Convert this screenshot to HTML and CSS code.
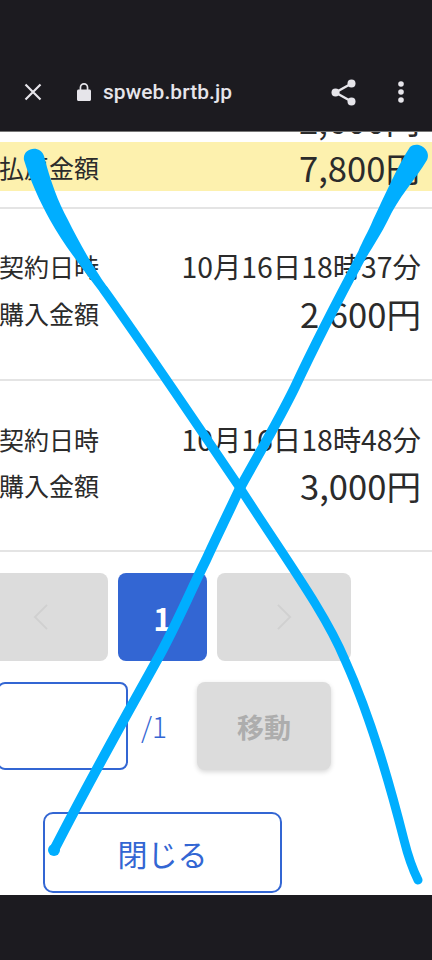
FILE: index.html
```html
<!DOCTYPE html>
<html lang="ja">
<head>
<meta charset="utf-8">
<title>spweb.brtb.jp</title>
<link rel="stylesheet" href="styles.css">
</head>
<body>
<div class="screen">
  <div class="status-space"></div>
  <header class="toolbar">
    <svg class="ic-close" viewBox="0 0 24 24"><path d="M3 3 21 21M21 3 3 21"/></svg>
    <svg class="ic-lock" viewBox="0 0 16 20"><path d="M2.5 7.5H3.6V5.4a4.4 4.4 0 0 1 8.8 0v2.1h1.1c.8 0 1.5.7 1.5 1.5v8.5c0 .8-.7 1.5-1.5 1.5h-11c-.8 0-1.5-.7-1.5-1.5V9c0-.8.7-1.5 1.5-1.5ZM5.3 7.5h5.4V5.4a2.7 2.7 0 0 0-5.4 0Z"/></svg>
    <span class="url">spweb.brtb.jp</span>
    <svg class="ic-share" viewBox="0 0 25 27"><circle cx="20.5" cy="4.5" r="4"/><circle cx="4.5" cy="13.5" r="4"/><circle cx="20.5" cy="22.5" r="4"/><path class="link" d="M20.5 4.5 4.5 13.5 20.5 22.5"/></svg>
    <svg class="ic-more" viewBox="0 0 6 22"><circle cx="3" cy="3" r="2.8"/><circle cx="3" cy="11" r="2.8"/><circle cx="3" cy="19" r="2.8"/></svg>
  </header>
  <main class="page">
    <div class="clipped-amount">2,600円</div>
    <div class="total">
      <span class="label">払戻金額</span>
      <span class="big">7,800円</span>
    </div>
    <section class="record first">
      <div class="line"><span class="label">契約日時</span><span class="date">10月16日18時37分</span></div>
      <div class="line amount"><span class="label">購入金額</span><span class="big">2,600円</span></div>
    </section>
    <section class="record">
      <div class="line"><span class="label">契約日時</span><span class="date">10月16日18時48分</span></div>
      <div class="line amount"><span class="label">購入金額</span><span class="big">3,000円</span></div>
    </section>
    <nav class="pager">
      <div class="page-btn prev"><svg viewBox="0 0 18 30"><path d="M16 2 3 15 16 28"/></svg></div>
      <div class="page-btn current">1</div>
      <div class="page-btn next"><svg viewBox="0 0 18 30"><path d="M2 2 15 15 2 28"/></svg></div>
    </nav>
    <div class="jump">
      <div class="page-input"></div>
      <span class="total-pages">/1</span>
      <div class="move">移動</div>
    </div>
    <div class="close-btn">閉じる</div>
  </main>
  <div class="nav-space"></div>
  <svg class="scribble" viewBox="0 0 432 960">
    <path class="s1" d="M104 290C140 340 190 414 240 488C285 558 325 612 345 660C372 720 390 785 404 840C409 860 413 870 418 880"/>
    <path class="s2" d="M363 253C340 296 318 338 295 387C278 422 258 455 240 488C225 520 215 540 206 560C190 592 175 628 157 660C135 700 95 770 54 850"/>
    <path class="t1" d="M24 160C22 148 40 144 44 156C50 180 58 202 68 220C78 240 92 266 107.6 287.4L100.4 292.6C82 268 62 242 50 220C40 202 30 180 24 160Z"/>
    <path class="t2" d="M410 147C418 140 432 150 427 160C415 180 398 198 388 220C382 232 374 245 367.4 255.4L358.6 250.6C362 242 368 232 373 220C385 195 398 165 410 147Z"/>
    <circle class="blob" cx="54" cy="850" r="6"/>
  </svg>
</div>
</body>
</html>
```
FILE: styles.css
```css
* { box-sizing: border-box; }
html, body { margin: 0; padding: 0; }
body { width: 432px; height: 960px; overflow: hidden; background: #1c1b20; font-family: "Noto Sans CJK JP", "Noto Sans", sans-serif; color: #2b2b2b; }
.screen { position: relative; width: 432px; height: 960px; display: flex; flex-direction: column; overflow: hidden; }
.status-space { height: 60px; background: #1c1b20; }
.toolbar { height: 71px; display: flex; align-items: center; background: #1c1b20; color: #e6e5ea; padding: 0 0 7px 23px; }
.ic-close { width: 20px; height: 20px; fill: none; stroke: #e6e5ea; stroke-width: 2.6; flex: none; }
.ic-lock { width: 16px; height: 20px; margin-left: 33px; fill: #e6e5ea; fill-rule: evenodd; flex: none; }
.url { margin-left: 11px; font: 500 20.9px "Roboto", sans-serif; letter-spacing: .1px; white-space: nowrap; width: 130px; flex: none; }
.ic-share { width: 25px; height: 27px; margin-left: 98px; fill: #e6e5ea; flex: none; }
.ic-share .link { fill: none; stroke: #e6e5ea; stroke-width: 2.4; }
.ic-more { width: 6px; height: 22px; margin-left: 42px; fill: #e6e5ea; flex: none; }
.page { flex: 1 1 auto; background: #fff; border-top: 1px solid #777; position: relative; overflow: hidden; display: flex; flex-direction: column; }
.clipped-amount { height: 10px; flex: none; display: flex; align-items: flex-end; justify-content: flex-end; padding: 0 12px 0 0; font-size: 34.6px; line-height: 46px; }
.total { height: 49px; flex: none; background: #fdf1ae; display: flex; justify-content: space-between; align-items: center; padding-right: 12px; }
.label { font-size: 25px; line-height: 30px; margin-left: -1px; flex: none; white-space: nowrap; }
.big { font-size: 34.6px; line-height: 46px; }
.date { font-size: 28.4px; line-height: 36px; white-space: nowrap; }
.record { border-top: 2px solid #e4e4e4; height: 172px; flex: none; padding: 39px 11px 0 0; }
.record.first { margin-top: 16px; }
.record + .record { height: 171px; padding-top: 40px; }
.line { display: flex; justify-content: space-between; align-items: center; height: 36px; }
.amount { margin-top: 11px; }
.record + .record .amount { margin-top: 10px; }
.pager { border-top: 2px solid #e4e4e4; display: flex; gap: 10px; padding-top: 21px; margin-left: -10px; height: 111px; flex: none; }
.page-btn { height: 88px; border-radius: 8px; background: #dcdcdc; display: flex; align-items: center; justify-content: center; }
.page-btn svg { width: 17px; height: 28px; fill: none; stroke: #d0d0d0; stroke-width: 2; }
.prev { width: 118px; justify-content: flex-start; padding-left: 42px; }
.current { width: 89px; background: #3366d3; color: #fff; font-size: 31px; font-weight: 700; }
.next { width: 134px; }
.jump { display: flex; align-items: center; margin-top: 21px; height: 88px; flex: none; }
.page-input { width: 131px; height: 88px; margin-left: -3px; border: 2px solid #3366d3; border-radius: 8px; flex: none; }
.total-pages { margin-left: 13px; width: 56px; color: #3366d3; font-size: 28px; font-weight: 300; line-height: 40px; flex: none; }
.move { width: 134px; height: 88px; border-radius: 8px; background: #dcdcdc; color: #adadad; font-size: 27px; font-weight: 700; display: flex; align-items: center; justify-content: center; box-shadow: 0 2px 5px rgba(0,0,0,.16); flex: none; }
.close-btn { margin: 42px 0 0 43px; width: 239px; height: 81px; border: 2px solid #3366d3; border-radius: 10px; color: #3366d3; font-size: 30px; display: flex; align-items: center; justify-content: center; flex: none; }
.nav-space { height: 65px; background: #1c1b20; flex: none; }
.scribble { position: absolute; left: 0; top: 0; width: 432px; height: 960px; pointer-events: none; }
.s1, .s2 { fill: none; stroke: #00aeff; stroke-linecap: round; stroke-linejoin: round; }
.s1 { stroke-width: 9; }
.s2 { stroke-width: 10; }
.t1, .t2, .blob { fill: #00aeff; }
```
